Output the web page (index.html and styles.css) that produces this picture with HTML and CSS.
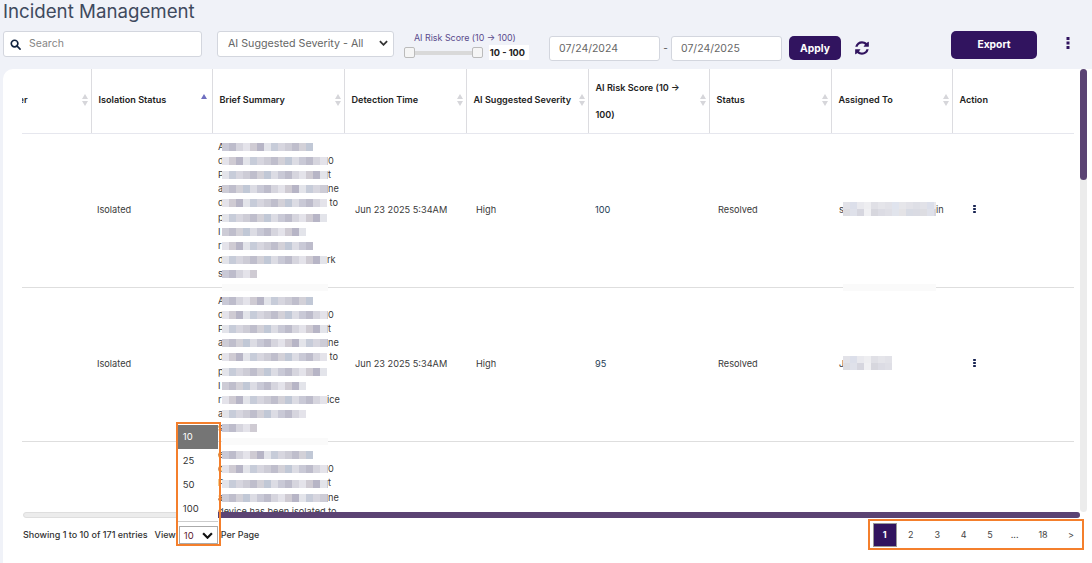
FILE: index.html
```html
<!DOCTYPE html>
<html lang="en">
<head>
<meta charset="utf-8">
<title>Incident Management</title>
<link rel="stylesheet" href="styles.css">
</head>
<body>
<header class="top">
  <h1 class="title">Incident Management</h1>
  <div class="toolbar">
    <label class="search">
      <svg class="search-icon" viewBox="0 0 12 12"><circle cx="5" cy="5" r="3.6"/><path d="M7.8 7.8 11 11"/></svg>
      <input class="search-input" type="text" placeholder="Search">
    </label>
    <div class="select-box"><span>AI Suggested Severity - All</span><svg class="chev" viewBox="0 0 10 6"><path d="M1 1l4 4 4-4"/></svg></div>
    <div class="slider">
      <div class="slider-label">AI Risk Score (10 → 100)</div>
      <div class="slider-row">
        <div class="slider-track"><span class="handle"></span><span class="handle"></span></div>
        <span class="slider-value">10 - 100</span>
      </div>
    </div>
    <input class="date first-date" type="text" value="07/24/2024">
    <span class="date-sep">-</span>
    <input class="date" type="text" value="07/24/2025">
    <button class="apply">Apply</button>
    <svg class="refresh" viewBox="0 0 1792 1792"><path d="M1639 1056q0 5-1 7-64 268-268 434.5t-478 166.5q-146 0-282.5-55t-243.5-157l-129 129q-19 19-45 19t-45-19-19-45v-448q0-26 19-45t45-19h448q26 0 45 19t19 45-19 45l-137 137q71 66 161 102t187 36q134 0 250-65t186-179q11-17 53-117 8-23 30-23h192q13 0 22.500 9.500t9.500 22.500zm25-800v448q0 26-19 45t-45 19h-448q-26 0-45-19t-19-45 19-45l138-138q-148-137-349-137-134 0-250 65t-186 179q-11 17-53 117-8 23-30 23h-199q-13 0-22.500-9.500t-9.500-22.500v-7q65-268 270-434.500t480-166.500q146 0 284 55.500t245 156.500l130-129q19-19 45-19t45 19 19 45z"/></svg>
    <button class="export">Export</button>
    <svg class="kebab" viewBox="0 0 4 12"><rect x="0.500" y="0" width="3" height="3"/><rect x="0.500" y="4.500" width="3" height="3"/><rect x="0.500" y="9" width="3" height="3"/></svg>
  </div>
</header>

<main class="card">
  <div class="grid-area">
    <div class="viewport">
      <table class="table">
        <colgroup>
          <col class="c-first"><col class="c-121"><col class="c-132"><col class="c-122"><col class="c-122"><col class="c-121"><col class="c-122"><col class="c-121"><col class="c-122">
        </colgroup>
        <thead>
          <tr>
            <th class="first-h"><span class="th-text">Device Number</span><svg class="sort" viewBox="0 0 6 12"><path d="M3 0l3 5H0z"/><path d="M3 12l3-5H0z"/></svg></th>
            <th><span class="th-text">Isolation Status</span><svg class="sort-active" viewBox="0 0 6 5"><path d="M3 0l3 5H0z"/></svg></th>
            <th><span class="th-text">Brief Summary</span><svg class="sort" viewBox="0 0 6 12"><path d="M3 0l3 5H0z"/><path d="M3 12l3-5H0z"/></svg></th>
            <th><span class="th-text">Detection Time</span><svg class="sort" viewBox="0 0 6 12"><path d="M3 0l3 5H0z"/><path d="M3 12l3-5H0z"/></svg></th>
            <th><span class="th-text">AI Suggested Severity</span><svg class="sort" viewBox="0 0 6 12"><path d="M3 0l3 5H0z"/><path d="M3 12l3-5H0z"/></svg></th>
            <th><span class="th-text th-tall">AI Risk Score (10 → 100)</span><svg class="sort" viewBox="0 0 6 12"><path d="M3 0l3 5H0z"/><path d="M3 12l3-5H0z"/></svg></th>
            <th><span class="th-text">Status</span><svg class="sort" viewBox="0 0 6 12"><path d="M3 0l3 5H0z"/><path d="M3 12l3-5H0z"/></svg></th>
            <th><span class="th-text">Assigned To</span><svg class="sort" viewBox="0 0 6 12"><path d="M3 0l3 5H0z"/><path d="M3 12l3-5H0z"/></svg></th>
            <th class="last-h"><span class="th-text">Action</span></th>
          </tr>
        </thead>
        <tbody>
          <tr>
            <td></td>
            <td class="p-iso">Isolated</td>
            <td class="p-sum">
              <div class="line"><span class="lead">A</span><span class="m w91"></span></div>
              <div class="line"><span class="lead">d</span><span class="m w106 s1"></span>0</div>
              <div class="line"><span class="lead">P</span><span class="m w106 s2"></span>t</div>
              <div class="line"><span class="lead">a</span><span class="m w106 s3"></span>ne</div>
              <div class="line"><span class="lead">d</span><span class="m w105 s1"></span>&nbsp;to</div>
              <div class="line"><span class="lead">p</span><span class="m w105 s2"></span></div>
              <div class="line"><span class="lead">I</span><span class="m w84 s3"></span></div>
              <div class="line"><span class="lead">r</span><span class="m w91 s1"></span></div>
              <div class="line"><span class="lead">d</span><span class="m w105 s2"></span>rk</div>
              <div class="line"><span class="lead">s</span><span class="m w35"></span></div>
              <span class="ghost"></span>
            </td>
            <td class="p-time">Jun 23 2025 5:34AM</td>
            <td class="p-sev">High</td>
            <td class="p-risk">100</td>
            <td class="p-status">Resolved</td>
            <td class="p-user">
              <div class="user-line"><span class="lead">s</span><span class="m2 w93"></span>in</div>
              <span class="ghost ghost-user"></span>
            </td>
            <td class="p-action"><svg class="dots" viewBox="0 0 3 9"><rect width="3" height="2.200"/><rect y="3.400" width="3" height="2.200"/><rect y="6.800" width="3" height="2.200"/></svg></td>
          </tr>
          <tr>
            <td></td>
            <td class="p-iso">Isolated</td>
            <td class="p-sum">
              <div class="line"><span class="lead">A</span><span class="m w91"></span></div>
              <div class="line"><span class="lead">d</span><span class="m w106 s1"></span>0</div>
              <div class="line"><span class="lead">P</span><span class="m w106 s2"></span>t</div>
              <div class="line"><span class="lead">a</span><span class="m w106 s3"></span>ne</div>
              <div class="line"><span class="lead">d</span><span class="m w105 s1"></span>&nbsp;to</div>
              <div class="line"><span class="lead">p</span><span class="m w105 s2"></span></div>
              <div class="line"><span class="lead">I</span><span class="m w84 s3"></span></div>
              <div class="line"><span class="lead">r</span><span class="m w105 s1"></span>ice</div>
              <div class="line"><span class="lead">a</span><span class="m w84 s2"></span></div>
              <div class="line"><span class="lead">s</span><span class="m w35"></span></div>
              <span class="ghost"></span>
            </td>
            <td class="p-time">Jun 23 2025 5:34AM</td>
            <td class="p-sev">High</td>
            <td class="p-risk">95</td>
            <td class="p-status">Resolved</td>
            <td class="p-user"><div class="user-line"><span class="lead">J</span><span class="m2 w49"></span></div></td>
            <td class="p-action"><svg class="dots" viewBox="0 0 3 9"><rect width="3" height="2.200"/><rect y="3.400" width="3" height="2.200"/><rect y="6.800" width="3" height="2.200"/></svg></td>
          </tr>
          <tr>
            <td></td>
            <td></td>
            <td class="p-sum">
              <div class="line"><span class="lead">e</span><span class="m w91"></span></div>
              <div class="line"><span class="lead">d</span><span class="m w106 s1"></span>0</div>
              <div class="line"><span class="lead">P</span><span class="m w106 s2"></span>t</div>
              <div class="line"><span class="lead">a</span><span class="m w106 s3"></span>ne</div>
              <div class="line">device has been isolated to</div>
              <div class="line"></div><div class="line"></div><div class="line"></div><div class="line"></div><div class="line"></div>
            </td>
            <td></td><td></td><td></td><td></td><td></td><td></td>
          </tr>
        </tbody>
      </table>
    </div>
    <div class="vbar"><span class="vthumb"></span></div>
  </div>
  <div class="hbar"><span class="hthumb"></span></div>
  <footer class="footer">
    <span class="entries">Showing 1 to 10 of 171 entries</span>
    <span class="view">View</span>
    <div class="per-select">
      <span class="per-value">10</span><svg class="chev chev-dark" viewBox="0 0 10 6"><path d="M1 1l4 4 4-4"/></svg>
      <div class="drop">
        <div class="opt opt-on">10</div>
        <div class="opt">25</div>
        <div class="opt">50</div>
        <div class="opt">100</div>
      </div>
    </div>
    <span class="per-page">Per Page</span>
    <nav class="pager">
      <span class="pg pg-on">1</span>
      <span class="pg">2</span>
      <span class="pg">3</span>
      <span class="pg">4</span>
      <span class="pg">5</span>
      <span class="pg pg-dots">...</span>
      <span class="pg pg-last">18</span>
      <span class="pg pg-next">&gt;</span>
    </nav>
  </footer>
</main>
</body>
</html>
```
FILE: styles.css
```css
* { box-sizing: border-box; }
html, body { height: 100%; }
body {
  margin: 0;
  background: #f0f2f8;
  font-family: Inter, "Noto Sans", sans-serif;
  color: #333;
  display: flex;
  flex-direction: column;
  overflow: hidden;
}
.top { padding-left: 3px; height: 69px; flex: none; }
.title { margin: 0; height: 22px; font-size: 18.700px; line-height: 24px; font-weight: 400; color: #3f4a5e; }
.toolbar { margin-top: 9px; display: flex; align-items: flex-start; }

.search { width: 199px; height: 26px; background: #fff; border: 1px solid #d3d6de; border-radius: 3px; display: flex; align-items: center; padding-left: 6px; }
.search-icon { width: 11px; height: 11px; fill: none; stroke: #10223f; stroke-width: 1.800; stroke-linecap: round; }
.search-input { border: 0; outline: 0; background: none; margin: 0 0 2px 8px; width: 160px; font: 10.500px Inter, sans-serif; color: #777; padding: 0; }
.search-input::placeholder { color: #858585; opacity: 1; }

.select-box { margin-left: 15px; width: 177px; height: 26px; background: #fff; border: 1px solid #d3d6de; border-radius: 3px; display: flex; align-items: center; justify-content: space-between; padding: 0 5px 2px 10px; font-size: 10.700px; color: #666; }
.chev { width: 9px; height: 6px; fill: none; stroke: #333; stroke-width: 2; }
.chev-dark { stroke: #111; stroke-width: 2; width: 11px; height: 7px; }

.slider { margin-left: 10px; width: 125px; height: 29px; }
.slider-label { margin-left: 10px; font-size: 8.900px; line-height: 12px; margin-top: 1px; color: #5a4a8c; white-space: nowrap; }
.slider-row { display: flex; align-items: center; margin-top: 1px; }
.slider-track { width: 79px; height: 11px; display: flex; justify-content: space-between; background: linear-gradient(#d9d9d9, #d9d9d9) center / 100% 4px no-repeat; }
.handle { width: 11px; height: 11px; background: #f5f5f5; border: 1px solid #bbb; border-radius: 2px; }
.slider-value { margin-left: 6px; padding: 0 4px 0 1px; background: #fff; height: 15px; line-height: 15px; font-size: 9.200px; font-weight: 700; color: #222; white-space: nowrap; }

.date { margin-top: 5px; width: 111px; height: 25px; border: 1px solid #d3d6de; border-radius: 3px; background: #fff; padding: 0 0 0 9px; font: 10.500px Inter, sans-serif; color: #666; outline: 0; }
.first-date { margin-left: 20px; }
.date-sep { margin-top: 5px; width: 11px; text-align: center; line-height: 25px; font-size: 10px; color: #555; }
.apply { margin: 5px 0 0 7px; width: 52px; height: 24px; border: 0; border-radius: 5px; background: #31145f; color: #fff; font: 700 10.300px Inter, sans-serif; padding: 0 0 1px; }
.refresh { margin: 9px 0 0 13px; width: 16px; height: 16px; fill: #31145f; flex: none; }
.export { margin-left: 81px; width: 86px; height: 28px; border: 0; border-radius: 5px; background: #31145f; color: #fff; font: 700 10.300px Inter, sans-serif; padding: 0 0 2px; }
.kebab { margin: 6px 0 0 29px; width: 4px; height: 12px; fill: #31145f; }

.card { margin-left: 3px; flex: 1; min-height: 0; background: #fff; border-top-left-radius: 10px; padding-left: 19px; display: flex; flex-direction: column; }
.grid-area { height: 443px; flex: none; display: flex; }
.viewport { width: 1053px; overflow: hidden; }
.table { margin-left: -100px; border-collapse: collapse; table-layout: fixed; width: 1152px; font-size: 9.200px; }
.c-first { width: 169px; }
.c-121 { width: 121px; }
.c-122 { width: 122px; }
.c-132 { width: 132px; }

th { height: 64px; padding: 0 3px 2px 7px; border-right: 1px solid #dcdce0; border-bottom: 1px solid #e6e7ee; text-align: left; font-size: 9.100px; font-weight: 600; color: #222; position: relative; }
.last-h { border-right: 0; }
.first-h { text-align: right; padding-right: 63px; }
.th-text { display: inline-block; }
.th-tall { line-height: 27px; width: 100px; margin-top: 2px; }
.sort { position: absolute; right: 3px; top: 25px; width: 6px; height: 12px; fill: #d6d6da; }
.sort-active { position: absolute; right: 5px; top: 25px; width: 6px; height: 5px; fill: #6f6fc0; }

td { padding: 0 0 2px; height: 154px; border-bottom: 1px solid #dedede; vertical-align: middle; font-size: 9.200px; color: #3a3a3a; position: relative; }
tbody tr:last-child td { border-bottom: 0; }
.p-iso { padding-left: 6px; }
.p-sum { padding: 1px 0 0 6px; }
.p-time { padding-left: 11px; }
.p-sev { padding-left: 10px; }
.p-risk { padding-left: 7px; color: #1d3b53; }
.p-status { padding-left: 9px; }
.p-user { padding-left: 8px; }
.p-action { padding-left: 21px; }
.line { height: 14.100px; line-height: 14.100px; display: flex; align-items: center; white-space: nowrap; }
.lead { width: 4px; flex: none; }
.m {
  height: 8px; flex: none;
  background-image: linear-gradient(90deg,
    #c9c9d6 0 7px, #bdbccb 7px 14px, #d6d5de 14px 21px, #e4e3ea 21px 28px,
    #cfcbd3 28px 35px, #b7b5c6 35px 42px, #e3e4ea 42px 49px, #c7ccd9 49px 56px,
    #d7d6df 56px 63px, #cdccd6 63px 70px, #bfbecc 70px 77px, #d3d1d8 77px 84px,
    #c1c8d6 84px 91px, #dcdce4 91px 98px);
  background-size: 98px 100%;
}
.m2 {
  height: 14px; flex: none;
  background-image:
    linear-gradient(90deg,
      #e2e2e8 0 7px, #dcdfea 7px 14px, #e9e9ee 14px 21px, #eeeef1 21px 28px,
      #e0e0e6 28px 35px, #e5e5ea 35px 42px, #e2e2e8 42px 49px, #e0e4ee 49px 56px,
      #e6e6ea 56px 63px, #e2e2e8 63px 70px, #dedfe6 70px 77px),
    linear-gradient(90deg,
      #dddde2 0 7px, #dfe1ea 7px 14px, #d6d6df 14px 21px, #f0f0f3 21px 28px,
      #d7d7de 28px 35px, #dcdce4 35px 42px, #dfdfe6 42px 49px, #e1e4ec 49px 56px,
      #e4e3e6 56px 63px, #d8dbe4 63px 70px, #dadbe3 70px 77px);
  background-size: 77px 50%;
  background-position: 0 0, 0 100%;
  background-repeat: repeat-x;
}
.s1 { background-position-x: -21px; }
.s2 { background-position-x: -42px; }
.s3 { background-position-x: -63px; }
.w35 { width: 35px; }
.w49 { width: 49px; }
.w84 { width: 84px; }
.w91 { width: 91px; }
.w93 { width: 93px; }
.w105 { width: 105px; }
.w106 { width: 106px; }
.ghost { position: absolute; left: 10px; bottom: -4px; width: 106px; height: 7px; background: #fafafa; }
.ghost-user { left: 12px; width: 93px; }
.user-line { display: flex; align-items: center; white-space: nowrap; }
.dots { display: block; width: 3px; height: 8px; fill: #14204f; }

.vbar { margin-left: 5px; width: 7px; height: 443px; background: #ececec; border-radius: 4px; }
.vthumb { display: block; height: 111px; background: #5b4373; border-radius: 4px; }
.hbar { margin-left: 1px; width: 1057px; height: 6px; flex: none; background: #ececec; border: 1px solid #dedede; border-radius: 3px; display: flex; justify-content: flex-end; }
.hthumb { width: 904px; margin: -1px; background: #5b4373; border-radius: 3px; }

.footer { display: flex; align-items: flex-start; padding-left: 1px; font-size: 9px; font-weight: 500; color: #333; }
.entries { margin-top: 11px; line-height: 11px; }
.view { margin-top: 11px; margin-left: 7px; line-height: 11px; }
.per-select { position: relative; margin: 8px 0 0 3px; width: 39px; height: 18px; border: 1px solid #aaa; background: #fff; display: flex; align-items: center; justify-content: space-between; padding: 0 4px; font-weight: 400; font-size: 9.500px; }
.per-value { color: #5a2030; }
.drop { position: absolute; left: -4px; right: -4px; bottom: -3px; height: 124px; border: 2px solid #f47f2c; padding: 1px 1px 0 0; pointer-events: none; }
.opt { height: 24px; line-height: 24px; padding-left: 5px; background: #fff; color: #333; }
.opt-on { background: #757575; color: #fff; }
.drop::after { content: ""; display: block; border-top: 1px solid #ccc; }
.per-page { margin-top: 11px; margin-left: 3px; line-height: 11px; }
.pager { margin: 1px 8px 0 auto; width: 216px; height: 31px; border: 2px solid #f47f2c; display: flex; align-items: center; padding-left: 3px; font-weight: 400; color: #444; }
.pg { width: 26.900px; text-align: center; }
.pg-on { width: 24px; height: 24px; margin-right: 1px; line-height: 22px; background: #31145f; border: 1px solid #999; color: #fff; font-weight: 700; }
.pg-dots { width: 23.300px; }
.pg-last { width: 34.700px; }
.pg-next { width: 22.300px; }
```
